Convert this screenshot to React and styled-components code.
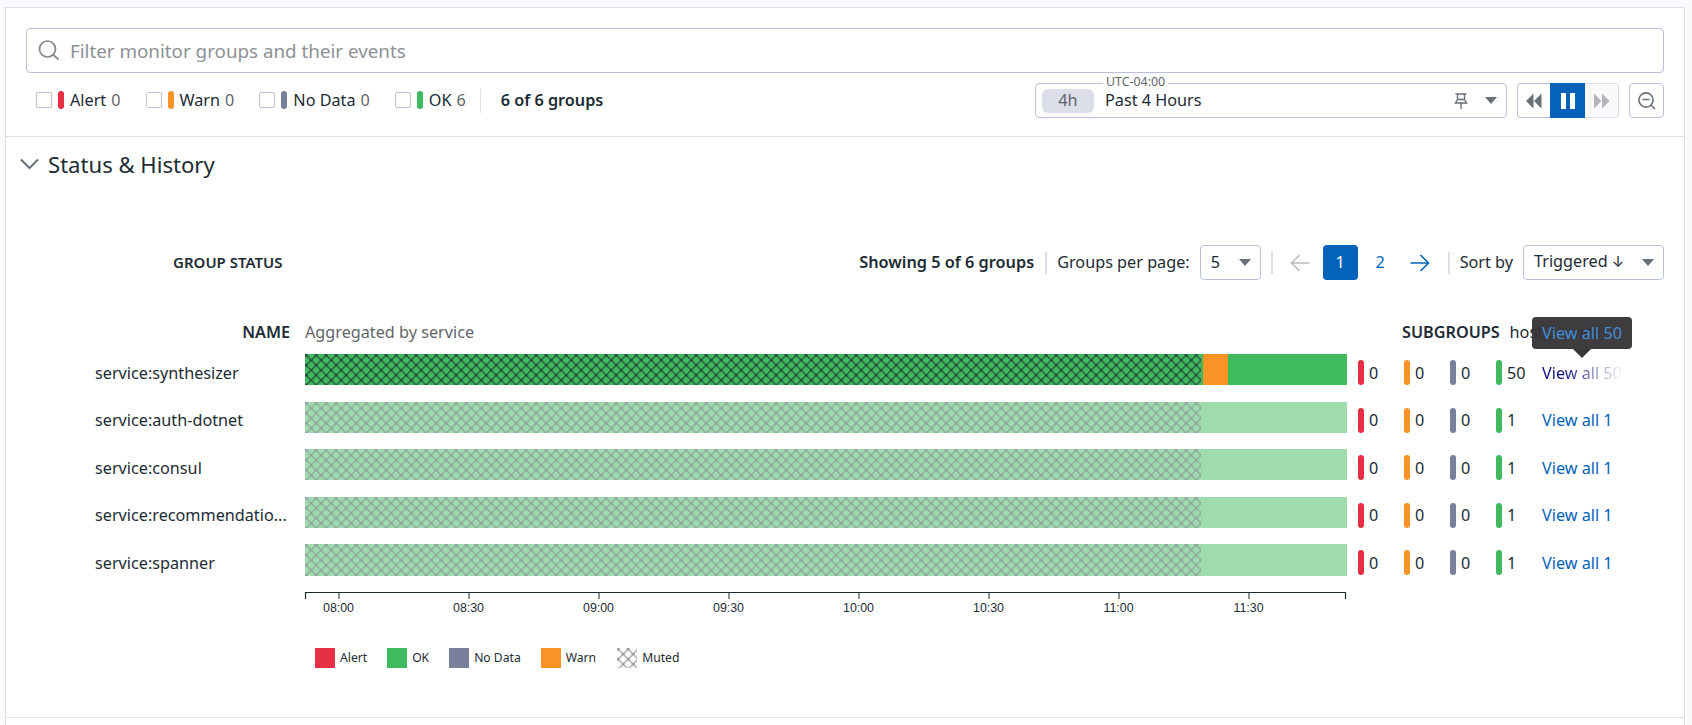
import React from 'react';
import styled, { createGlobalStyle, css } from 'styled-components';

const c = {
  text: '#1c2b34', muted: '#5f666b', soft: '#8c9196', border: '#b9c0da', line: '#dcdfea',
  blue: '#0562bb', red: '#e62e44', orange: '#f99325', grey: '#78809b', green: '#3fba5f',
};

const Global = createGlobalStyle`
  * { box-sizing: border-box; }
  body { margin: 0; background: #f9fafc; color: ${c.text}; font: 16.22px/20px "Noto Sans", sans-serif; }
`;
const Page = styled.div`height: 725px; padding: 7px 7px 0 5px; overflow: hidden;`;
const Panel = styled.main`height: 730px; background: #fff; border: 1px solid ${c.line};`;
const Filters = styled.header`height: 129px; padding: 20px 20px 0; border-bottom: 1px solid ${c.line};`;
const Search = styled.div`
  height: 45px; display: flex; align-items: center; gap: 11px; padding: 0 12px 0 11px;
  border: 1px solid ${c.border}; border-radius: 4px; color: ${c.soft}; font-size: 18.8px;
`;
const Toolbar = styled.div`display: flex; align-items: center; height: 35px; margin-top: 10px; padding-left: 10px;`;
const Check = styled.label`display: flex; align-items: center; height: 20px; margin: -2px ${p => p.$gap}px 0 0; white-space: pre;`;
const Box = styled.span`width: 16px; height: 16px; border: 1px solid ${c.border}; border-radius: 2px; background: #fff;`;
const Pill = styled.span`width: 6px; height: ${p => p.$h || 18}px; border-radius: 3px; background: ${p => p.$color};`;
const CheckPill = styled(Pill)`margin: 0 6px;`;
const Count = styled.span`color: ${c.muted}; margin-left: 5px;`;
const Divider = styled.span`
  width: ${p => p.$w || 2}px; height: ${p => p.$h || 22}px; margin-left: ${p => p.$ml || 0}px;
  background: ${c.line}; flex: none;
`;
const Strong = styled.strong`font-weight: 600; white-space: nowrap;`;
const Total = styled(Strong)`margin: -2px 0 0 20px;`;
const Range = styled.div`
  position: relative; display: flex; align-items: center; width: 472px; height: 35px; margin-left: auto;
  border: 1px solid ${c.border}; border-radius: 4px; padding: 0 9px 0 6px;
`;
const Zone = styled.span`
  position: absolute; left: 67px; top: -10px; background: #fff; padding: 0 3px;
  color: ${c.muted}; font-size: 12.4px; line-height: 16px;
`;
const Span = styled.span`
  width: 52px; height: 24px; border-radius: 6px; background: #dcdfe9; color: ${c.muted};
  display: grid; place-items: center; margin-right: 11px; padding-bottom: 1px;
`;
const RangeText = styled.span`margin-top: -2px;`;
const RangeIcons = styled.span`display: flex; align-items: center; gap: 17px; margin-left: auto;`;
const Group = styled.div`display: flex; margin: 0 10px;`;
const Btn = styled.span`
  display: grid; place-items: center; width: 34px; height: 35px; border: 1px solid ${c.border}; background: #fff;
  ${p => p.$kind === 'first' && css`width: 33px; border-right: 0; border-radius: 4px 0 0 4px;`}
  ${p => p.$kind === 'active' && css`background: ${c.blue}; border-color: ${c.blue}; width: 35px;`}
  ${p => p.$kind === 'last' && css`background: #f9fafb; border-color: ${c.line}; border-left: 0; border-radius: 0 4px 4px 0;`}
  ${p => p.$kind === 'single' && css`border-radius: 4px; width: 35px;`}
`;
const Title = styled.h2`
  display: flex; align-items: center; gap: 9px; height: 28px; margin: 13px 0 0 14px; font-size: 22.1px; font-weight: 400;
`;
const StatusSection = styled.section`height: 581px; border-bottom: 1px solid ${c.line}; overflow: hidden;`;
const StatusBar = styled.div`display: flex; align-items: center; height: 35px; margin: 67px 20px 0 0;`;
const GroupTitle = styled(Strong)`width: 276.5px; text-align: right; font-size: 15px; margin: -2px auto 0 0;`;
const Showing = styled(Strong)`margin-top: -2px; font-size: 16.3px;`;
const Select = styled.span`
  display: flex; align-items: center; justify-content: space-between; width: ${p => p.$w}px; height: 35px;
  border: 1px solid ${c.border}; border-radius: 4px; padding: 0 9px 0 10px; margin-left: ${p => p.$ml}px;
`;
const Value = styled.span`margin-top: -2px; white-space: nowrap;`;
const DownArrow = styled.span`font-family: Inter, sans-serif; font-size: 15px;`;
const Label = styled.span`margin: -2px 0 0 10px; white-space: nowrap;`;
const Pager = styled.div`display: flex; align-items: center; margin: 0 18px 0 17px;`;
const PageNo = styled.span`
  width: 35px; height: 35px; display: grid; place-items: center; border-radius: 4px; padding-bottom: 1px;
  color: ${p => (p.$on ? '#fff' : c.blue)}; background: ${p => (p.$on ? c.blue : 'transparent')};
  margin: ${p => (p.$on ? '0 5px 0 13px' : '0 12px 0 0')};
`;
const grid = css`display: grid; grid-template-columns: 210px 1042px 1fr; padding-left: 89px;`;
const Heads = styled.div`${grid} height: 20px; margin-top: 42px; align-items: center;`;
const NameHead = styled(Strong)`text-align: right; padding-right: 15px;`;
const By = styled.span`color: ${c.muted};`;
const SubHead = styled.div`display: flex; gap: 10px; margin-left: 55px; white-space: nowrap;`;
const Rows = styled.div`padding-top: 12px;`;
const Row = styled.div`${grid} height: ${p => p.$h}px;`;
const Name = styled.span`padding-top: ${p => p.$top}px; white-space: nowrap;`;
const Bar = styled.svg`display: block; width: 1042px; height: ${p => p.$h}px; opacity: ${p => (p.$dim ? 0.5 : 1)};`;
const Subs = styled.div`display: flex; padding: 6px 0 0 11px; height: 31px;`;
const Sub = styled.span`display: flex; align-items: center; gap: 5px; width: 46px;`;
const Num = styled.span`margin-top: ${p => (p.$top - 9) * 2}px;`;
const Link = styled.span`
  position: relative; color: ${c.blue}; line-height: ${p => p.$top * 2 + 8}px; white-space: nowrap; height: 25px;
`;
const Fade = styled.span`
  color: transparent; background: linear-gradient(90deg, #10107e 25%, rgba(16,16,126,.04)); background-clip: text;
`;
const Tip = styled.span`
  position: absolute; left: -10px; top: -43px; width: 100px; height: 32px; border-radius: 4px;
  background: rgba(52,49,53,.95); color: #4190da; display: grid; place-items: center;
  &::after { content: ''; position: absolute; left: 41px; top: 32px; border: 9px solid transparent; border-bottom: 0; border-top-color: #39363a; }
`;
const Axis = styled.svg`display: block; width: 1062px; height: 34px; margin: 0 0 0 289px; overflow: visible;`;
const Tick = styled.text`font: 12.4px "Liberation Sans", Arial, sans-serif; fill: ${c.text}; text-anchor: middle;`;
const Legend = styled.div`display: flex; margin: 22px 0 0 309px; height: 20px;`;
const Item = styled.span`display: flex; align-items: center; gap: 5px; margin-right: ${p => p.$gap}px; font-size: 12.15px;`;
const Swatch = styled.span`width: 20px; height: 20px; background: ${p => p.$color};`;

const Caret = () => <svg width="12" height="7"><path d="M0 0h12L6 7z" fill="#687078" /></svg>;
const Arrow = ({ left }) => (
  <svg width="20" height="18" fill="none" stroke={left ? '#b9bcc1' : c.blue} strokeWidth="1.6">
    {left ? <path d="M19.5 9H1.500M9.500 1L1.500 9l8 8" /> : <path d="M.5 9H18.500M10.500 1l8 8-8 8" />}
  </svg>
);
const Double = ({ right }) => (
  <svg width="16" height="16" fill={right ? '#b2b6b9' : '#687078'}>
    {right ? <path d="M0 .5l7.500 7.500L0 15.500zM8 .5L15.500 8 8 15.500z" /> : <path d="M7.500 .5v15L0 8zM15.500 .5v15L8 8z" />}
  </svg>
);

const Hatch = ({ id, color }) => (
  <pattern id={id} width="10" height="10" patternUnits="userSpaceOnUse" patternTransform="translate(1.2 1.2)">
    <path d="M-1-1l12 12M-1 11L11-1" stroke={color} strokeWidth="1.150" />
    <path d="M-1.300 0h2.600M8.700 0h2.600M-1.300 10h2.600M8.700 10h2.600M3.700 5h2.600" stroke={color} strokeWidth="2.400" />
  </pattern>
);

const Timeline = ({ strong, h }) => (
  <Bar $h={h} $dim={!strong}>
    <rect width="1042" height={h} fill={c.green} />
    <rect width="896" height={h} fill="url(#hatch)" />
    {strong && <rect x="898" width="25" height={h} fill={c.orange} />}
  </Bar>
);

const Defs = styled.svg`position: absolute;`;

const filters = [['Alert', 0, c.red, 25], ['Warn', 0, c.orange, 25], ['No Data', 0, c.grey, 25], ['OK', 6, c.green, 14]];
const rows = [
  ['synthesizer', 50, 48, 31, 9], ['auth-dotnet', 1, 47, 31, 8], ['consul', 1, 48, 31, 9],
  ['recommendatio...', 1, 47, 31, 8], ['spanner', 1, 48, 32, 9],
];
const legend = [['Alert', c.red, 20], ['OK', c.green, 20], ['No Data', c.grey, 20], ['Warn', c.orange, 21]];
const times = ['08:00', '08:30', '09:00', '09:30', '10:00', '10:30', '11:00', '11:30'];

export default function App() {
  return (
    <Page>
      <Global />
      <Defs width="0" height="0">
        <defs>
          <Hatch id="hatch" color="#234536" />
          <Hatch id="hatch-key" color="#949494" />
        </defs>
      </Defs>
      <Panel>
        <Filters>
          <Search>
            <svg width="21" height="21" fill="none" stroke="#81878c" strokeWidth="1.700"><circle cx="9.500" cy="9" r="8" /><path d="M15 14.500l5.500 5" /></svg>
            Filter monitor groups and their events
          </Search>
          <Toolbar>
            {filters.map(([name, n, color, gap]) => (
              <Check key={name} $gap={gap}><Box /><CheckPill $color={color} />{name}<Count>{n}</Count></Check>
            ))}
            <Divider $h={24} $w={1} />
            <Total>6 of 6 groups</Total>
            <Range>
              <Zone>UTC-04:00</Zone>
              <Span>4h</Span><RangeText>Past 4 Hours</RangeText>
              <RangeIcons>
                <svg width="14" height="16" fill="none" stroke="#687078" strokeWidth="1.400"><path d="M1.500 1h11M3.500 1v6M10.500 1v6M3.500 6.500L1.500 10h11l-2-3.500zM7 10v6" /></svg>
                <Caret />
              </RangeIcons>
            </Range>
            <Group>
              <Btn $kind="first"><Double /></Btn>
              <Btn $kind="active"><svg width="14" height="16" fill="#fff"><path d="M0 0h5v16H0zM9 0h5v16H9z" /></svg></Btn>
              <Btn $kind="last"><Double right /></Btn>
            </Group>
            <Btn $kind="single">
              <svg width="18" height="18" fill="none" stroke="#687078" strokeWidth="1.600"><circle cx="8" cy="8" r="7.100" /><path d="M4.500 7.500h7M13 13l4 4" /></svg>
            </Btn>
          </Toolbar>
        </Filters>
        <StatusSection>
          <Title>
            <svg width="19" height="12" fill="none" stroke="#687078" strokeWidth="2"><path d="M1 1.500l8.500 8.500L18 1.500" /></svg>
            Status &amp; History
          </Title>
          <StatusBar>
            <GroupTitle>GROUP STATUS</GroupTitle>
            <Showing>Showing 5 of 6 groups</Showing>
            <Divider $ml={11} />
            <Label>Groups per page:</Label>
            <Select $w={61} $ml={10}><Value>5</Value><Caret /></Select>
            <Divider $ml={10} />
            <Pager><Arrow left /><PageNo $on>1</PageNo><PageNo>2</PageNo><Arrow /></Pager>
            <Divider />
            <Label>Sort by</Label>
            <Select $w={141} $ml={10}><Value>Triggered <DownArrow>↓</DownArrow></Value><Caret /></Select>
          </StatusBar>
          <Heads>
            <NameHead>NAME</NameHead>
            <By>Aggregated by service</By>
            <SubHead><Strong>SUBGROUPS</Strong><span>host,service</span></SubHead>
          </Heads>
          <Rows>
            {rows.map(([name, n, height, bar, top], i) => (
              <Row key={name} $h={height}>
                <Name $top={top}>service:{name}</Name>
                <Timeline strong={i === 0} h={bar} />
                <Subs>
                  {[c.red, c.orange, c.grey, c.green].map((color, j) => (
                    <Sub key={color}><Pill $color={color} $h={25} /><Num $top={top}>{j === 3 ? n : 0}</Num></Sub>
                  ))}
                  <Link $top={top}>
                    {i === 0 ? <Fade>View all 50</Fade> : 'View all 1'}
                    {i === 0 && <Tip>View all 50</Tip>}
                  </Link>
                </Subs>
              </Row>
            ))}
          </Rows>
          <Axis>
            <path d="M10.500 7V.5h1040V7" fill="none" stroke={c.text} strokeWidth="1.200" />
            {times.map((t, i) => (
              <g key={t}>
                <path d={`M${44 + i * 130} 0v7`} stroke={c.text} />
                <Tick x={43.5 + i * 130} y="20">{t}</Tick>
              </g>
            ))}
          </Axis>
          <Legend>
            {legend.map(([name, color, gap]) => <Item key={name} $gap={gap}><Swatch $color={color} />{name}</Item>)}
            <Item><svg width="20" height="20"><rect width="20" height="20" fill="url(#hatch-key)" /></svg>Muted</Item>
          </Legend>
        </StatusSection>
      </Panel>
    </Page>
  );
}
